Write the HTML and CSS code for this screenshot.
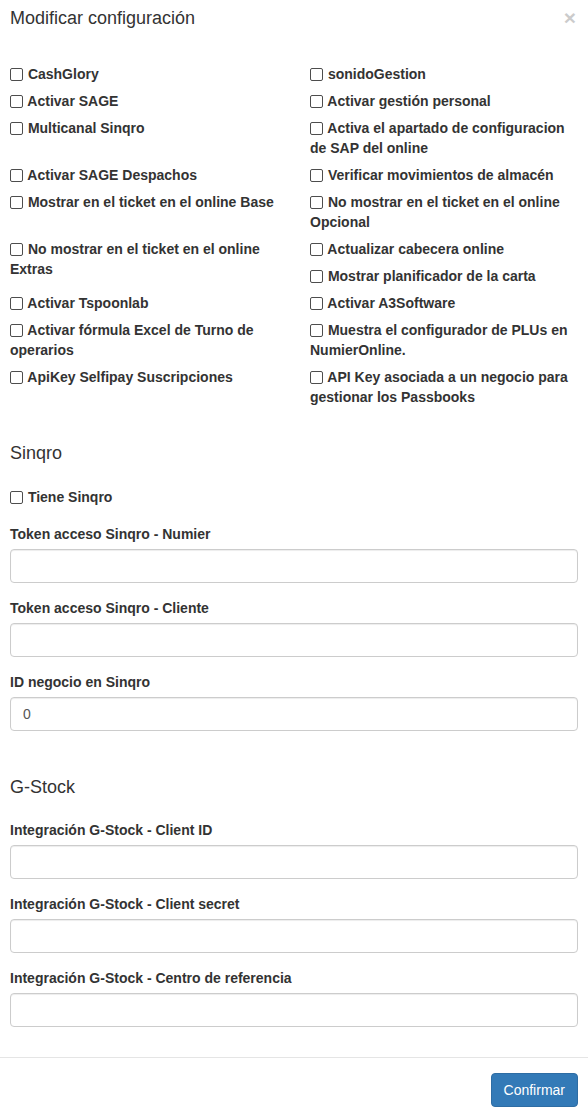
FILE: index.html
```html
<!DOCTYPE html>
<html lang="es">
<head>
  <meta charset="UTF-8" />
  <title>Modificar configuración</title>
  <link rel="stylesheet" href="styles.css">
</head>
<body>
<div class="modal">
  <div class="modal-header">
    <h4 class="modal-title">Modificar configuración</h4>
    <button class="close" type="button">&times;</button>
  </div>

  <div class="modal-body">
    <div class="checks">
      <div class="cell"><label class="check"><input type="checkbox"> CashGlory</label></div>
      <div class="cell"><label class="check"><input type="checkbox"> sonidoGestion</label></div>

      <div class="cell"><label class="check"><input type="checkbox"> Activar SAGE</label></div>
      <div class="cell"><label class="check"><input type="checkbox"> Activar gestión personal</label></div>

      <div class="cell"><label class="check"><input type="checkbox"> Multicanal Sinqro</label></div>
      <div class="cell"><label class="check"><input type="checkbox"> Activa el apartado de configuracion de SAP del online</label></div>

      <div class="cell"><label class="check"><input type="checkbox"> Activar SAGE Despachos</label></div>
      <div class="cell"><label class="check"><input type="checkbox"> Verificar movimientos de almacén</label></div>

      <div class="cell"><label class="check"><input type="checkbox"> Mostrar en el ticket en el online Base</label></div>
      <div class="cell"><label class="check"><input type="checkbox"> No mostrar en el ticket en el online Opcional</label></div>

      <div class="cell"><label class="check"><input type="checkbox"> No mostrar en el ticket en el online Extras</label></div>
      <div class="cell">
        <label class="check"><input type="checkbox"> Actualizar cabecera online</label>
        <label class="check"><input type="checkbox"> Mostrar planificador de la carta</label>
      </div>

      <div class="cell"><label class="check"><input type="checkbox"> Activar Tspoonlab</label></div>
      <div class="cell"><label class="check"><input type="checkbox"> Activar A3Software</label></div>

      <div class="cell"><label class="check"><input type="checkbox"> Activar fórmula Excel de Turno de operarios</label></div>
      <div class="cell"><label class="check"><input type="checkbox"> Muestra el configurador de PLUs en NumierOnline.</label></div>

      <div class="cell"><label class="check"><input type="checkbox"> ApiKey Selfipay Suscripciones</label></div>
      <div class="cell"><label class="check"><input type="checkbox"> API Key asociada a un negocio para gestionar los Passbooks</label></div>
    </div>

    <h4 class="section-title">Sinqro</h4>
    <label class="check single"><input type="checkbox"> Tiene Sinqro</label>

    <div class="form-group">
      <label class="field-label">Token acceso Sinqro - Numier</label>
      <input class="form-control" type="text">
    </div>
    <div class="form-group">
      <label class="field-label">Token acceso Sinqro - Cliente</label>
      <input class="form-control" type="text">
    </div>
    <div class="form-group">
      <label class="field-label">ID negocio en Sinqro</label>
      <input class="form-control" type="text" value="0">
    </div>

    <h4 class="section-title gstock">G-Stock</h4>

    <div class="form-group">
      <label class="field-label">Integración G-Stock - Client ID</label>
      <input class="form-control" type="text">
    </div>
    <div class="form-group">
      <label class="field-label">Integración G-Stock - Client secret</label>
      <input class="form-control" type="text">
    </div>
    <div class="form-group">
      <label class="field-label">Integración G-Stock - Centro de referencia</label>
      <input class="form-control" type="text">
    </div>
  </div>

  <div class="modal-footer">
    <button class="btn-primary" type="button">Confirmar</button>
  </div>
</div>
</body>
</html>
```

FILE: styles.css
```css
* { box-sizing: border-box; }
body { margin: 0; background: #fff; font-family: "Liberation Sans", Arial, sans-serif; font-size: 14px; line-height: 20px; color: #333; }

.modal { width: 588px; background: #fff; }
.modal-header { display: flex; justify-content: space-between; align-items: flex-start; padding: 5px 10px 0; }
.modal-title { margin: 0; font-size: 18px; font-weight: normal; line-height: 26px; color: #333; }
.close { background: none; border: none; padding: 0; margin: 2px 2px 0 0; font-family: "Liberation Sans", Arial, sans-serif; font-size: 21px; font-weight: bold; line-height: 21px; color: #000; opacity: 0.2; cursor: pointer; }

.modal-body { padding: 33px 10px 30px; }

.checks { display: grid; grid-template-columns: 284px 268px; column-gap: 16px; row-gap: 7px; }
.cell { display: flex; flex-direction: column; gap: 7px; }
.check { display: block; font-weight: bold; line-height: 20px; cursor: pointer; }
.check input { appearance: none; -webkit-appearance: none; width: 13px; height: 13px; margin: 0 1px 0 0; vertical-align: -2px; border: 1px solid #4d4d4d; border-radius: 2px; background: #fff; }

.section-title { margin: 33px 0 21px; font-size: 18px; font-weight: normal; line-height: 26px; color: #333; }
.section-title.gstock { margin: 43px 0 20px; }
.single { margin-bottom: 17px; }

.form-group { margin-bottom: 15px; }
.form-group:last-child { margin-bottom: 0; }
.field-label { display: block; margin-bottom: 5px; font-weight: bold; }
.form-control { display: block; width: 100%; height: 34px; padding: 6px 12px; font-family: inherit; font-size: 14px; color: #555; background: #fff; border: 1px solid #ccc; border-radius: 4px; box-shadow: inset 0 1px 1px rgba(0,0,0,0.075); }

.modal-footer { display: flex; justify-content: flex-end; padding: 15px 10px 10px; border-top: 1px solid #e5e5e5; }
.btn-primary { height: 34px; padding: 6px 12px; font-family: inherit; font-size: 14px; line-height: 20px; color: #fff; background: #337ab7; border: 1px solid #2e6da4; border-radius: 4px; cursor: pointer; }
```
